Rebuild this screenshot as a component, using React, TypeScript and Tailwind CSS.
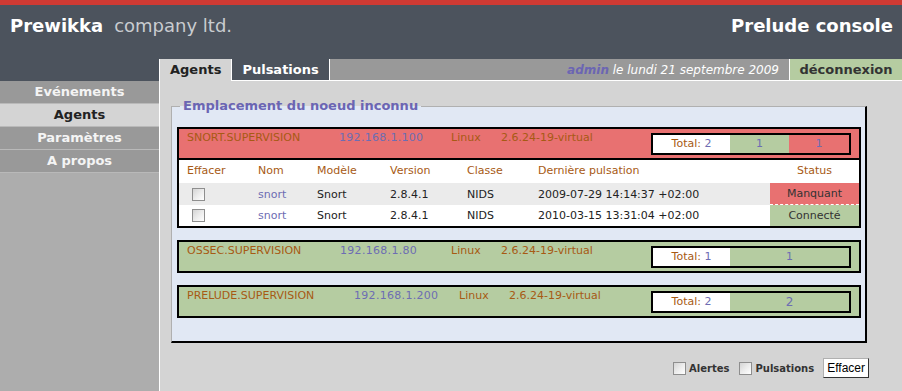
import React from "react";

const font = "font-['DejaVu_Sans','Liberation_Sans',sans-serif]";

const menu = [
    {label: "Evénements", active: false},
    {label: "Agents", active: true},
    {label: "Paramètres", active: false},
    {label: "A propos", active: false},
];

type Agent = {
    name: string;
    ip: string;
    nameW: string;
    ipW: string;
    linuxW: string;
    total: number;
    ok: number;
    missing: number;
    big?: boolean;
    rows?: {name: string; model: string; version: string; cls: string; last: string; status: string}[];
};

const agents: Agent[] = [
    {
        name: "SNORT.SUPERVISION",
        ip: "192.168.1.100",
        nameW: "w-[160px]",
        ipW: "w-[112px]",
        linuxW: "w-[50px]",
        total: 2,
        ok: 1,
        missing: 1,
        rows: [
            {name: "snort", model: "Snort", version: "2.8.4.1", cls: "NIDS", last: "2009-07-29 14:14:37 +02:00", status: "Manquant"},
            {name: "snort", model: "Snort", version: "2.8.4.1", cls: "NIDS", last: "2010-03-15 13:31:04 +02:00", status: "Connecté"},
        ],
    },
    {
        name: "OSSEC.SUPERVISION",
        ip: "192.168.1.80",
        nameW: "w-[161px]",
        ipW: "w-[111px]",
        linuxW: "w-[50px]",
        total: 1,
        ok: 1,
        missing: 0,
    },
    {
        name: "PRELUDE.SUPERVISION",
        ip: "192.168.1.200",
        nameW: "w-[175px]",
        ipW: "w-[105px]",
        linuxW: "w-[50px]",
        total: 2,
        ok: 2,
        missing: 0,
        big: true,
    },
];

function Check() {
    return (
        <span className="inline-block w-[13px] h-[13px] border border-[#8e8e8e] bg-gradient-to-br from-[#d4d4d4] via-[#ececec] to-white" />
    );
}

function AgentBlock({agent}: {agent: Agent}) {
    const hasMissing = agent.missing > 0;
    return (
        <div className="w-[684px] border-2 border-black">
            <div className={`flex items-start h-[29px] text-[11px] ${hasMissing ? "bg-[#e87171]" : "bg-[#b5cca1]"}`}>
                <span className={`${agent.nameW} pl-[8px] pt-[1px] text-[#a75a14] shrink-0`}>{agent.name}</span>
                <span className={`${agent.ipW} pt-[1px] text-[#6d6db3] tracking-[0.3px] shrink-0`}>{agent.ip}</span>
                <span className={`${agent.linuxW} pt-[1px] text-[#a75a14] shrink-0`}>Linux</span>
                <span className="pt-[1px] text-[#a75a14]">2.6.24-19-virtual</span>
                <div className="ml-auto mr-[8px] mt-[4px] w-[200px] h-[22px] border-2 border-black flex">
                    <div className="w-[77px] bg-white flex items-center justify-center text-[#a75a14]">
                        Total:&nbsp;<span className="text-[#6d6db3]">{agent.total}</span>
                    </div>
                    <div className={`${hasMissing ? "w-[59px]" : "flex-1"} bg-[#b5cca1] flex items-center justify-center text-[#6d6db3] ${agent.big ? "text-[12px]" : ""}`}>
                        {agent.ok}
                    </div>
                    {hasMissing && (
                        <div className="flex-1 bg-[#e87171] flex items-center justify-center text-[#6d6db3]">
                            {agent.missing}
                        </div>
                    )}
                </div>
            </div>
            {agent.rows && (
                <div className="border-t-2 border-black bg-white text-[11px]">
                    <div className="grid grid-cols-[79px_59px_73px_77px_71px_232px_89px] h-[23px] items-center text-[#a75a14]">
                        <span className="pl-[8px]">Effacer</span>
                        <span>Nom</span>
                        <span>Modèle</span>
                        <span>Version</span>
                        <span>Classe</span>
                        <span>Dernière pulsation</span>
                        <span className="text-center">Status</span>
                    </div>
                    {agent.rows.map((r, i) => {
                        const missing = r.status === "Manquant";
                        return (
                            <div
                                key={i}
                                className={`grid grid-cols-[79px_59px_73px_77px_71px_232px_89px] items-center text-[#222] ${i === 0 ? "h-[22px] bg-[#ebebeb]" : "h-[21px] bg-white"}`}
                            >
                                <span className="pl-[13px] flex items-center"><Check /></span>
                                <span className="text-[#6d6db3] pt-[2px]">{r.name}</span>
                                <span className="pt-[2px]">{r.model}</span>
                                <span className="pt-[2px]">{r.version}</span>
                                <span className="pt-[2px]">{r.cls}</span>
                                <span className="pt-[2px]">{r.last}</span>
                                <span
                                    className={`h-full flex items-center justify-center text-[#333] pt-[2px] ${missing ? "bg-[#e87171] border-b border-dashed border-white" : "bg-[#b5cca1]"}`}
                                >
                                    {r.status}
                                </span>
                            </div>
                        );
                    })}
                </div>
            )}
        </div>
    );
}

export default function App() {
    return (
        <div className={`w-[902px] h-[391px] overflow-hidden bg-[#d4d4d4] ${font}`}>
            <header className="h-[59px] bg-[#4c535d]">
                <div className="h-[5px] bg-[#cf3a33]" />
                <div className="flex items-baseline justify-between pl-[10px] pr-[9px] pt-[10px] text-[18px] leading-[22px]">
                    <div>
                        <span className="font-bold text-white">Prewikka</span>
                        <span className="ml-[11px] text-[#c9ccd0]">company ltd.</span>
                    </div>
                    <span className="font-bold text-white">Prelude console</span>
                </div>
            </header>
            <div className="flex h-[332px]">
                <aside className="w-[159px] flex flex-col">
                    <div className="h-[22px] bg-[#4c535d]" />
                    <nav className="flex-1 bg-[#adadad] flex flex-col">
                        {menu.map((m) => (
                            <div
                                key={m.label}
                                className={`h-[23px] leading-[22px] border-b border-[#b9b9b9] text-center text-[13px] font-bold ${m.active ? "bg-[#d4d4d4] text-[#222]" : "bg-[#999999] text-[#f4f4f4]"}`}
                            >
                                {m.label}
                            </div>
                        ))}
                    </nav>
                </aside>
                <div className="flex-1 border-l border-white flex flex-col">
                    <div className="flex h-[22px] text-[13px] font-bold bg-[#4c535d]">
                        <div className="px-[10px] bg-[#d4d4d4] text-[#222] leading-[22px]">Agents</div>
                        <div className="px-[10px] bg-[#4c535d] text-white border-l border-b border-white leading-[21px]">Pulsations</div>
                        <div className="flex-1 bg-[#999999] border-l border-b border-white flex items-center justify-end pr-[10px] text-[12px] font-normal italic text-white">
                            <span className="font-bold text-[#6b65b3]">admin</span>&nbsp;le lundi 21 septembre 2009
                        </div>
                        <div className="w-[113px] bg-[#b5cca1] border-l border-b border-white text-[#333] flex items-center justify-center leading-[21px]">
                            déconnexion
                        </div>
                    </div>
                    <main className="flex-1 pl-[11px] pt-[17px]">
                        <fieldset className="w-[696px] bg-[#e1e8f4] border-l border-t border-[#b0b0b0] border-r-2 border-b-2 border-r-black border-b-black pb-[23px]">
                            <legend className="ml-[8px] px-[3px] text-[13px] font-bold text-[#6b65b3] leading-[16px]">
                                Emplacement du noeud inconnu
                            </legend>
                            <div className="flex flex-col gap-[12px] pl-[5px] pt-[13px]">
                                {agents.map((a) => (
                                    <AgentBlock key={a.name} agent={a} />
                                ))}
                            </div>
                        </fieldset>
                        <div className="w-[698px] flex justify-end items-center mt-[15px] text-[10px] font-bold text-[#333]">
                            <Check />
                            <span className="ml-[3px] mr-[10px]">Alertes</span>
                            <Check />
                            <span className="ml-[3px] mr-[9px]">Pulsations</span>
                            <button className="h-[20px] px-[3px] bg-white border border-t-[#b0b0b0] border-l-[#b0b0b0] border-r-[#333] border-b-[#333] font-normal text-black font-['Liberation_Sans',sans-serif] text-[12px]">
                                Effacer
                            </button>
                        </div>
                    </main>
                </div>
            </div>
        </div>
    );
}
